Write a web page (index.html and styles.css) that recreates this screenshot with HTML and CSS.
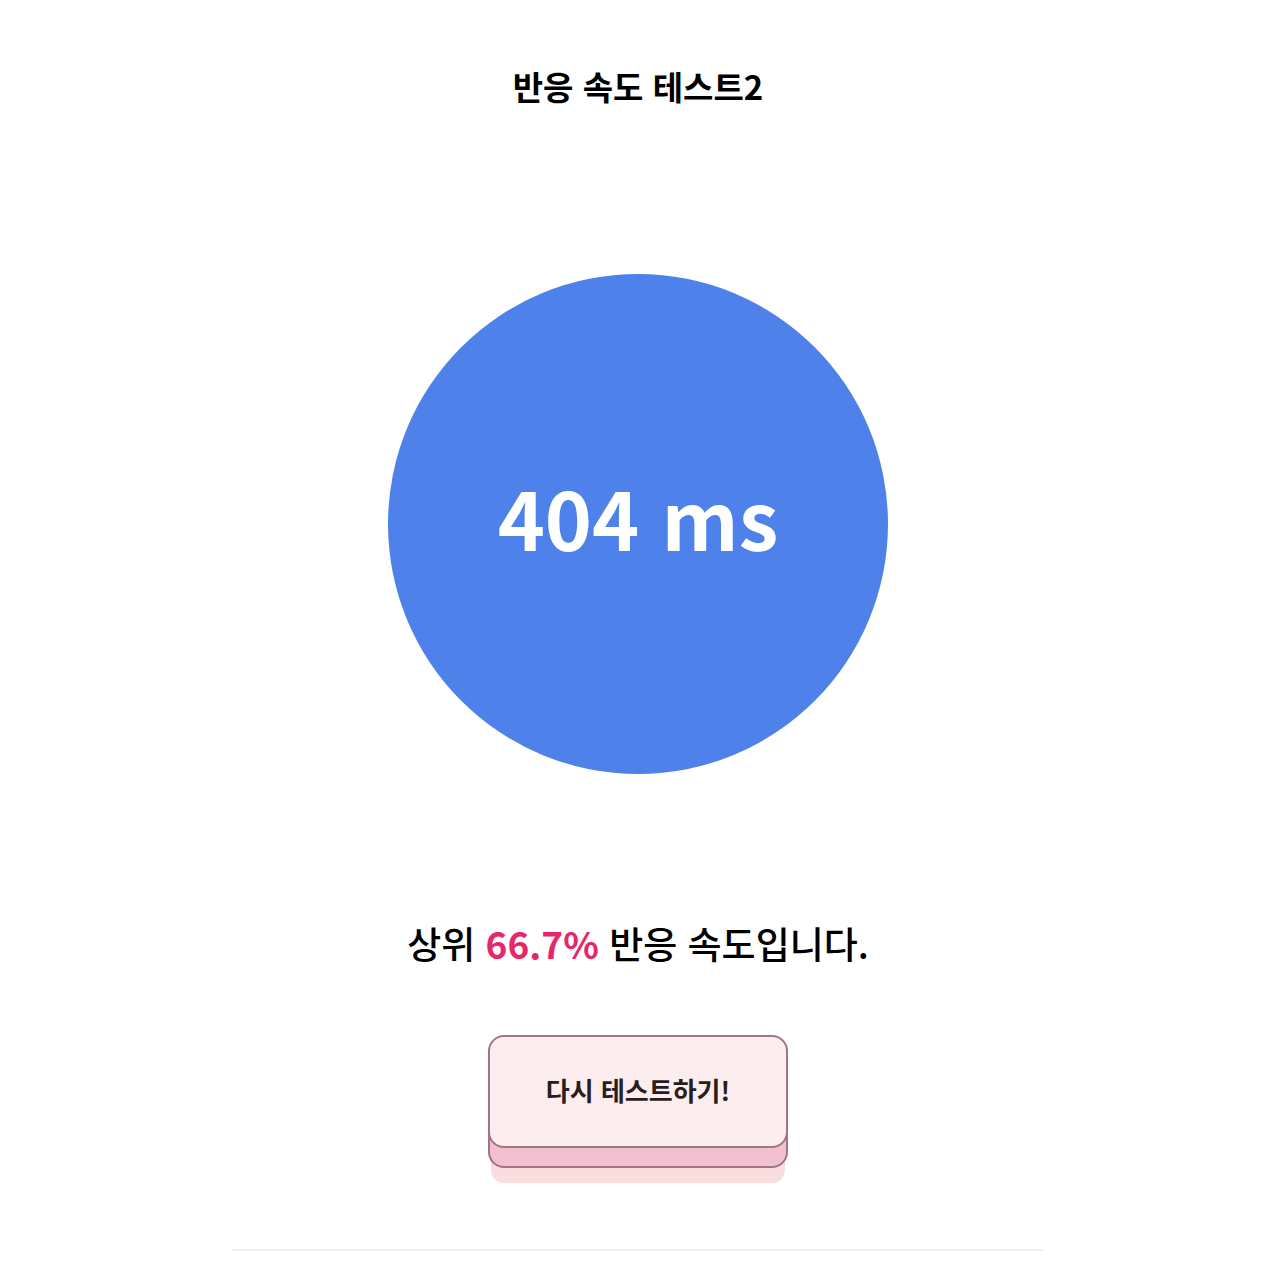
FILE: index.html
```html
<!DOCTYPE html>
<html lang="ko">

<head>
    <meta charset="UTF-8">
    <meta name="viewport" content="width=device-width, initial-scale=1.0">
    <title>반응 속도 테스트2</title>
    <link rel="stylesheet" href="styles.css">
</head>

<body>
    <div class="container">
        <h1 class="title">반응 속도 테스트2</h1>

        <div class="circle">
            <span class="time">404 ms</span>
        </div>

        <p class="result">상위 <strong>66.7%</strong> 반응 속도입니다.</p>

        <div class="btn">
            <button type="button">다시 테스트하기!</button>
        </div>

        <hr class="line">
    </div>
</body>

</html>
```

FILE: styles.css
```css
body {
    margin: 0;
    background: #ffffff;
    font-family: "Noto Sans CJK KR", "Noto Sans", sans-serif;
    color: #000000;
}

.container {
    width: 812px;
    margin: 0 auto;
    position: relative;
    left: -2px;
    display: flex;
    flex-direction: column;
    align-items: center;
}

.container .title {
    margin: 63px 0 0;
    font-size: 33px;
    line-height: 47px;
    font-weight: 700;
}

.container .circle {
    width: 500px;
    height: 500px;
    margin-top: 164px;
    border-radius: 50%;
    background-color: #4e82ea;
    display: flex;
    justify-content: center;
    align-items: center;
}

.container .circle .time {
    color: #ffffff;
    font-size: 80px;
    font-weight: 700;
    line-height: 1;
    margin-bottom: 16px;
}

.container .result {
    margin: 142px 0 0;
    font-size: 37px;
    line-height: 54px;
    font-weight: 500;
}

.container .result strong {
    color: #e8266a;
    font-weight: 700;
}

.container .btn {
    margin-top: 65px;
}

.container .btn button {
    width: 300px;
    height: 113px;
    padding-bottom: 6px;
    border: 2px solid #a07585;
    border-radius: 16px;
    background-color: #fcedef;
    color: #2b1d1d;
    font-family: inherit;
    font-size: 26px;
    font-weight: 700;
    cursor: pointer;
    box-shadow: 0 20px 0 -2px #f1bfcd,
                0 20px 0 0 #a07585,
                0 38px 0 -3px #fadede;
}

.container .line {
    width: 812px;
    margin: 101px 0 0;
    border: 0;
    border-top: 2px solid #f0f0f0;
}
```
